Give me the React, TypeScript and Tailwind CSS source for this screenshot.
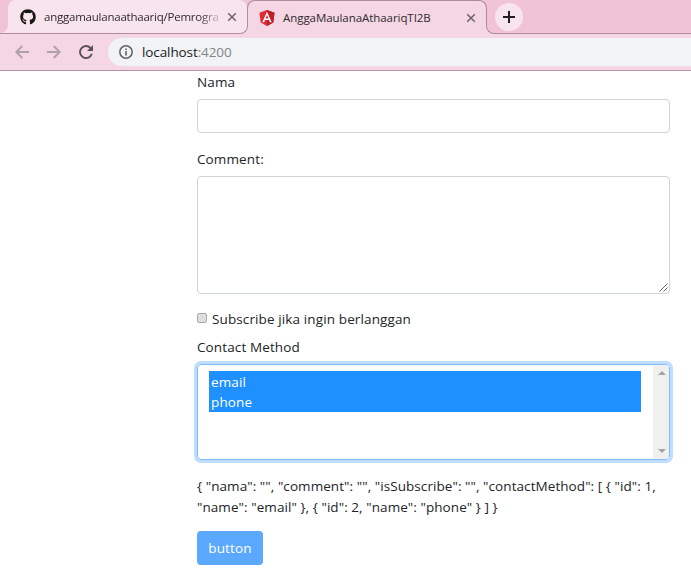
import React from "react";
import { FaGithub } from "react-icons/fa";

const CloseIcon = () => (
  <svg width="10" height="10" viewBox="0 0 10 10" className="shrink-0">
    <path d="M1.2 1.2 8.8 8.8M8.8 1.2 1.2 8.8" stroke="#6b626b" strokeWidth="1.5" fill="none" />
  </svg>
);

const AngularLogo = () => (
  <svg width="16" height="16" viewBox="0 0 16 16" className="shrink-0">
    <path d="M8 0 15.5 2.7 14.3 12.5 8 16 1.7 12.5.5 2.7z" fill="#dd2c35" />
    <path d="M8 0 15.5 2.7 14.3 12.5 8 16z" fill="#bd202b" />
    <path fillRule="evenodd" d="M8 1.8 3.3 12.3h1.8l.9-2.3h4l.9 2.3h1.8zM8 5.1 9.4 8.5H6.6z" fill="#fff" />
  </svg>
);

const Foot = ({ side }: { side: "left" | "right" }) =>
  side === "left" ? (
    <span className="absolute bottom-0 right-full -mr-px h-[9px] w-[9px] bg-[#f5d6e3]">
      <span className="block h-full w-full rounded-br-[8px] border-b border-r border-[#ae8c9c] bg-[#f8e4ec]" />
    </span>
  ) : (
    <span className="absolute bottom-0 left-full -ml-px h-[9px] w-[9px] bg-[#f5d6e3]">
      <span className="block h-full w-full rounded-bl-[8px] border-b border-l border-[#ae8c9c] bg-[#f0c3d6]" />
    </span>
  );

function TabStrip() {
  return (
    <div className="flex h-[34px] bg-[#f0c3d6] text-[11.5px] text-[#2f2a31]">
      <div className="w-2 shrink-0 border-b border-[#ae8c9c] bg-[#f8e4ec]">
        <div className="h-full rounded-br-[8px] bg-[#f0c3d6]" />
      </div>
      <div className="w-[239px] shrink-0 border-b border-[#ae8c9c] bg-[#f0c3d6]">
        <div className="flex h-full items-center rounded-t-[8px] bg-[#f8e4ec] pl-3 pr-[10px]">
          <FaGithub size={16} color="#191717" className="shrink-0" />
          <span className="ml-2 w-[180px] whitespace-nowrap tracking-[-0.23px] [mask-image:linear-gradient(to_right,black_86%,transparent)]">
            anggamaulanaathaariq/Pemrogra
          </span>
          <span className="ml-auto flex">
            <CloseIcon />
          </span>
        </div>
      </div>
      <div className="relative w-[240px] shrink-0">
        <div className="flex h-full items-center rounded-t-[8px] border-x border-t border-[#ae8c9c] bg-[#f5d6e3] pl-[11px] pr-[10px]">
          <AngularLogo />
          <span className="ml-2 whitespace-nowrap tracking-[-0.06px]">AnggaMaulanaAthaariqTI2B</span>
          <span className="ml-auto flex">
            <CloseIcon />
          </span>
        </div>
        <Foot side="left" />
        <Foot side="right" />
      </div>
      <div className="flex flex-1 border-b border-[#ae8c9c] pl-2 pt-[3px]">
        <span className="flex h-7 w-7 items-center justify-center rounded-full bg-[#f8e4ec]">
          <svg width="12" height="12" viewBox="0 0 12 12">
            <path d="M6 0v12M0 6h12" stroke="#221d26" strokeWidth="2" />
          </svg>
        </span>
      </div>
    </div>
  );
}

function Toolbar() {
  return (
    <div className="flex h-[37px] items-start border-b border-[#b4929f] bg-[#f5d6e3] pt-1">
      <div className="flex h-7 items-center pl-[15px]">
        <svg width="14" height="14" viewBox="0 0 14 14" fill="none" stroke="#b39fab" strokeWidth="1.9">
          <path d="M14 7H1.5M7.3 1 1.3 7l6 6" />
        </svg>
        <svg width="14" height="14" viewBox="0 0 14 14" fill="none" stroke="#b39fab" strokeWidth="1.9" className="ml-[18px]">
          <path d="M0 7h12.5M6.7 1l6 6-6 6" />
        </svg>
        <svg width="14" height="14" viewBox="0 0 14 14" fill="none" className="ml-[18px]">
          <path d="M11.6 3.1A6 6 0 1 0 12.8 8.8" stroke="#5a525a" strokeWidth="1.9" />
          <path d="M14 0v6H8z" fill="#5a525a" />
        </svg>
      </div>
      <div className="ml-[15px] flex h-7 flex-1 items-center rounded-l-full bg-[#f1f3f4] pl-[11px] text-[13.5px] tracking-[-0.1px] text-[#202124]">
        <svg width="14" height="14" viewBox="0 0 14 14" fill="none" stroke="#5f6368">
          <circle cx="7" cy="7" r="6.2" strokeWidth="1.5" />
          <path d="M7 6v4.4M7 3.4v1.5" strokeWidth="1.6" />
        </svg>
        <span className="ml-[9px]">
          localhost<span className="text-[#80868b]">:4200</span>
        </span>
      </div>
    </div>
  );
}

function ContactSelect() {
  return (
    <div className="mt-[6px] flex h-24 overflow-hidden rounded-[4px] border border-[#80bdff] shadow-[0_0_0_3px_#bfdeff]">
      <div className="flex-1 pl-[11px] pr-3 pt-[6px]">
        <div className="bg-[#1e90ff] pl-[2px] text-white">
          <div className="h-5 leading-[22px]">email</div>
          <div className="h-[21px] leading-[22px]">phone</div>
        </div>
      </div>
      <div className="-my-px -mr-px flex w-[17px] flex-col items-center justify-between bg-[#f0f0f0] py-[7px]">
        <svg width="8" height="4" viewBox="0 0 8 4">
          <path d="M0 4 4 0l4 4z" fill="#a3a3a3" />
        </svg>
        <svg width="8" height="4" viewBox="0 0 8 4">
          <path d="M0 0l4 4 4-4z" fill="#a3a3a3" />
        </svg>
      </div>
    </div>
  );
}

export default function App() {
  return (
    <div className="h-[574px] w-[691px] overflow-hidden bg-white font-['Open_Sans','Noto_Sans',sans-serif]">
      <TabStrip />
      <Toolbar />
      <form className="ml-[197px] flex w-[473px] flex-col text-[13.5px] leading-[21px] tracking-[0.12px] text-[#212529]">
        <label className="mt-[1px]">Nama</label>
        <div className="mt-[6px] h-[34px] rounded-[4px] border border-[#ced4da]" />
        <label className="mt-4">Comment:</label>
        <div className="mt-[6px] flex h-[118px] items-end justify-end rounded-[4px] border border-[#ced4da] p-px">
          <svg width="9" height="9" viewBox="0 0 9 9" stroke="#666" strokeWidth="1">
            <path d="M.5 8.5l8-8M4.5 8.5l4-4" />
          </svg>
        </div>
        <label className="mt-[15px] flex">
          <span className="mt-[4px] h-[10px] w-[10px] rounded-[2px] border border-[#a9a9a9] bg-[#dedede]" />
          <span className="ml-[5px]">Subscribe jika ingin berlanggan</span>
        </label>
        <label className="mt-[7px]">Contact Method</label>
        <ContactSelect />
        <p className="mt-4 whitespace-nowrap tracking-[0.07px]">
          {'{ "nama": "", "comment": "", "isSubscribe": "", "contactMethod": [ { "id": 1,'}
          <br />
          {'"name": "email" }, { "id": 2, "name": "phone" } ] }'}
        </p>
        <button type="button" className="mt-[13px] h-[34px] w-[66px] rounded-[4px] bg-[#5aa9ff] font-medium text-white">
          button
        </button>
      </form>
    </div>
  );
}
